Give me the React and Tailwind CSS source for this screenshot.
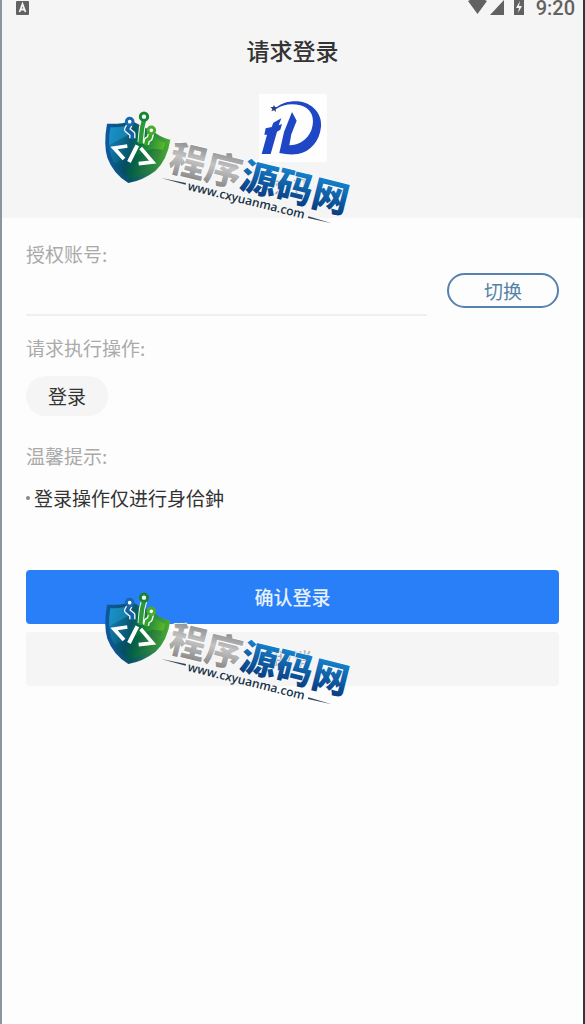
import React from 'react';

const CompanyLogo = () => (
  <svg viewBox="27 27 204 204" className="size-[68px]" role="img" aria-label="HD">
    <rect x="27" y="27" width="204" height="204" fill="#fefefe" />
    <path d="M72 60L75 66L84 67L77 73L78 81L72 76L64 79L67 72L61 66L69 66Z" fill="#2d3c7c" />
    <path d="M78 68C98 51 126 46 153 50C190 57 217 88 213 125C209 169 180 200 144 207Q118 211 88 204L102 141L126 81L140 107L124 148L118 181C147 181 173 163 184 136C196 103 187 71 151 61C124 54 99 59 80 71Z" fill="#1f46c4" />
    <path d="M47 130L65 126L70 113L94 100L86 121L96 117L91 134L81 140L62 207L35 207L51 149L43 149Z" fill="#1f46c4" />
  </svg>
);

const Watermark = ({ id, className = '' }) => (
  <svg
    viewBox="30 72 756 354"
    className={`pointer-events-none absolute left-[99px] h-[118px] w-[252px] ${className}`}
    aria-hidden="true"
  >
    <defs>
      <linearGradient id={`${id}-shield`} x1="0" y1="0" x2="1" y2="0.25">
        <stop offset="0" stopColor="#1684c4" />
        <stop offset="0.45" stopColor="#07566b" />
        <stop offset="0.6" stopColor="#07733f" />
        <stop offset="1" stopColor="#57b52d" />
      </linearGradient>
      <linearGradient id={`${id}-rim`} x1="0" y1="0" x2="1" y2="0">
        <stop offset="0" stopColor="#0f58a0" />
        <stop offset="0.4" stopColor="#07516a" />
        <stop offset="1" stopColor="#49ae2c" />
      </linearGradient>
      <linearGradient id={`${id}-grey`} x1="0" y1="0" x2="0" y2="1">
        <stop offset="0.2" stopColor="#8e8e8e" />
        <stop offset="0.5" stopColor="#c4c4c4" />
        <stop offset="0.9" stopColor="#858585" />
      </linearGradient>
      <linearGradient id={`${id}-blue`} x1="0" y1="0" x2="0" y2="1">
        <stop offset="0.2" stopColor="#1784ce" />
        <stop offset="0.9" stopColor="#08387c" />
      </linearGradient>
    </defs>

    {/* shield */}
    <path d="M48 116Q88 119 121 107L190 142Q216 161 238 164Q229 224 193 258Q155 287 112 294Q67 267 49 218Q37 178 48 116Z" fill={`url(#${id}-rim)`} />
    <path d="M58 127Q94 128 123 118L185 151Q206 168 223 174Q211 223 183 247Q151 272 114 281Q76 257 60 214Q50 178 58 127Z" fill={`url(#${id}-shield)`} />
    <path d="M58 127Q84 128 105 122L112 150L54 181Q53 155 58 127Z" fill="#20a0d5" opacity="0.5" />
    <path d="M69 235L185 191L216 194Q204 230 183 247Q151 272 114 281Q85 263 69 235Z" fill="#043c52" opacity="0.3" />

    {/* circuit nodes */}
    <g fill="none" strokeLinejoin="round">
      <g stroke="#f7f7f7" strokeWidth="19">
        <path d="M116 118L108 134L124 147L124 160" />
        <path d="M159 106L153 130L149 172" />
        <path d="M181 142L176 160L168 165L165 178" />
      </g>
      <path d="M116 118L108 134L124 147L124 162" stroke="#1263a3" strokeWidth="11" />
      <path d="M159 106L153 130L148 176" stroke="#2a9a39" strokeWidth="13" />
      <path d="M181 142L176 160L168 165L164 181" stroke="#35a32f" strokeWidth="11" />
    </g>
    <g fill="#fff" strokeWidth="9">
      <circle cx="116" cy="110" r="10" stroke="#1768ae" />
      <circle cx="159" cy="95" r="11" stroke="#188536" />
      <circle cx="181" cy="136" r="10" stroke="#47ad2c" />
    </g>

    {/* code mark */}
    <g fill="none" stroke="#fff" strokeWidth="11">
      <path d="M109 183L69 189L99 222" />
      <path d="M139 181L114 231" strokeWidth="12" />
      <path d="M149 189L185 231L143 236" />
    </g>

    {/* lettering */}
    <g transform="translate(288 230) rotate(14)">
      <text
        x="-52"
        y="38"
        fontSize="110"
        fontWeight="900"
        fontFamily="'Noto Sans CJK SC', sans-serif"
        stroke="#fff"
        strokeWidth="4"
        paintOrder="stroke"
      >
        <tspan fill={`url(#${id}-grey)`}>程序</tspan>
        <tspan fill={`url(#${id}-blue)`}>源码网</tspan>
      </text>
    </g>
    <g transform="translate(288 314) rotate(14)">
      <text x="0" y="0" fontSize="36" fontWeight="600" fontFamily="'Open Sans', sans-serif" fill="#183247">
        www.cxyuanma.com
      </text>
    </g>
    <path d="M210 279L285 294L284 299Z" fill="#344451" />
    <path d="M652 394L722 415L651 399Z" fill="#344451" />
  </svg>
);

const StatusBar = () => (
  <div className="flex h-4 items-center justify-between pr-2 pl-3.5 text-[#616161]">
    <svg viewBox="0 0 14 14" className="size-3.5" aria-hidden="true">
      <rect width="13" height="14" rx="1" fill="currentColor" />
      <path d="M3.5 11L6.5 3L9.5 11M4.5 8.5H8.5" fill="none" stroke="#f5f5f5" strokeWidth="1.8" />
    </svg>
    <div className="flex items-center">
      <svg viewBox="0 0 60 16" className="mr-2 h-4 w-[60px]" aria-hidden="true">
        <path d="M0 1Q9-4 19 1L9.5 14Z" fill="currentColor" />
        <path d="M22 15L36 0V15Z" fill="currentColor" />
        <path d="M46 0H56V15H46Z" fill="currentColor" />
        <path d="M52 1L48 8H51L50 13L54 6H51Z" fill="#f5f5f5" />
      </svg>
      <span className="font-['Roboto',sans-serif] text-xl leading-4 font-medium">9:20</span>
    </div>
  </div>
);

const App = () => {
  return (
    <div
      lang="zh-CN"
      className="relative min-h-screen border-r-2 border-l-2 border-r-[#34373a] border-l-[#8b949f] bg-[#fdfdfd] font-['Noto_Sans_CJK_SC',sans-serif] text-[#333]"
    >
      <header className="bg-[#f5f5f5] pb-2">
        <StatusBar />
        <div className="flex flex-col items-center pt-[18px]">
          <h1 className="text-[23px] leading-8 font-medium">请求登录</h1>
          <div className="mt-7">
            <CompanyLogo />
          </div>
          <p className="mt-3 mb-3 text-lg leading-6 text-[#999]">欢迎</p>
        </div>
      </header>

      <main className="px-6 pt-5">
        {/* Account */}
        <div className="flex items-end gap-5">
          <div className="flex-1 border-b-2 border-[#f0f0f0]">
            <label htmlFor="account" className="block text-[19px] leading-8 text-[#aaa]">授权账号:</label>
            <input id="account" type="text" className="block h-11 w-full bg-transparent text-lg outline-none" />
          </div>
          <button type="button" className="mb-2 h-[35px] w-28 rounded-full border-2 border-[#5682af] text-[19px] leading-7 text-[#5682a5]">
            切换
          </button>
        </div>

        {/* Requested action */}
        <section className="mt-4">
          <h2 className="text-[19px] leading-8 text-[#aaa]">请求执行操作:</h2>
          <span className="mt-3 inline-block rounded-full bg-[#f5f5f5] px-[22px] py-1 text-[19px] leading-8">登录</span>
        </section>

        {/* Tips */}
        <section className="mt-6">
          <h2 className="text-[19px] leading-8 text-[#aaa]">温馨提示:</h2>
          <p className="mt-2.5 flex items-center gap-1 text-[19px] leading-8">
            <span className="size-1 rounded-full bg-[#888]" />
            登录操作仅进行身佮鈡
          </p>
        </section>

        <div className="mt-14 flex flex-col gap-2">
          <button type="button" className="h-[54px] rounded bg-[#297ff8] text-[19px] font-medium text-[#e7f1fb]">
            确认登录
          </button>
          <button type="button" className="h-[54px] rounded bg-[#f5f5f5] text-[19px] text-[#aaa]">
            取消
          </button>
        </div>
      </main>

      <Watermark id="top" className="top-[109px]" />
      <Watermark id="bottom" className="top-[590px]" />
    </div>
  );
};

export default App;
